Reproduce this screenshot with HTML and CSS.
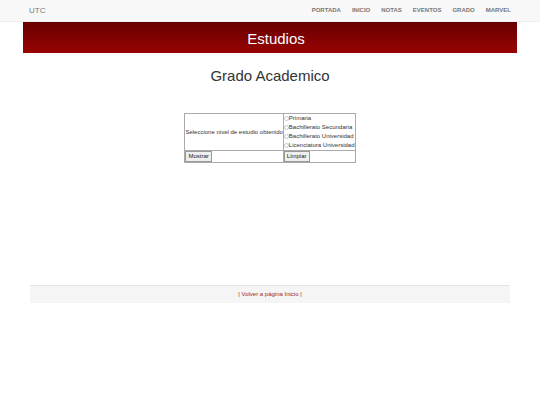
FILE: index.html
```html
<!DOCTYPE html>
<html lang="es">
<head>
<meta charset="utf-8">
<meta name="viewport" content="width=device-width, initial-scale=1">
<title>Estudios</title>
<link rel="stylesheet" href="styles.css">
</head>
<body>
<nav class="navbar">
  <a class="brand" href="#">UTC</a>
  <ul class="menu">
    <li><a href="#">PORTADA</a></li>
    <li><a href="#">INICIO</a></li>
    <li><a href="#">NOTAS</a></li>
    <li><a href="#">EVENTOS</a></li>
    <li><a href="#">GRADO</a></li>
    <li><a href="#">MARVEL</a></li>
  </ul>
</nav>
<header class="banner"><h1>Estudios</h1></header>
<main class="content">
  <h2>Grado Academico</h2>
  <form>
    <table class="studies">
      <tr>
        <td id="level-label">Seleccione nivel de estudio obtenido</td>
        <td>
          <div role="radiogroup" aria-labelledby="level-label">
            <label class="option"><input type="radio" name="level">Primaria</label>
            <label class="option"><input type="radio" name="level">Bachillerato Secundaria</label>
            <label class="option"><input type="radio" name="level">Bachillerato Universidad</label>
            <label class="option"><input type="radio" name="level">Licenciatura Universidad</label>
          </div>
        </td>
      </tr>
      <tr>
        <td><button type="button">Mostrar</button></td>
        <td><button type="reset">Limpiar</button></td>
      </tr>
    </table>
  </form>
</main>
<footer class="footer"><a href="#">| Volver a página Inicio |</a></footer>
</body>
</html>
```
FILE: styles.css
```css
* {
  box-sizing: border-box;
}

body {
  margin: 0;
  background: #fff;
  color: #333;
  font: 6px/9px "Liberation Sans", Arial, sans-serif;
}

a {
  text-decoration: none;
}

.navbar {
  display: flex;
  align-items: center;
  justify-content: space-between;
  height: 22px;
  padding: 0 29px;
  background: #f8f8f8;
  border-bottom: 1px solid #eee;
}

.brand {
  color: #777;
  font-size: 8px;
}

.menu {
  display: flex;
  gap: 11px;
  margin: 0;
  padding: 0;
  list-style: none;
}

.menu a {
  color: #777;
  font-weight: bold;
}

h1,
h2 {
  margin: 0;
  font-size: 15px;
  line-height: 17px;
  font-weight: normal;
  text-align: center;
}

.banner {
  margin: 0 23px;
  padding: 8px 0 6px 12px;
  background: linear-gradient(#670000, #990303);
  color: #fff;
}

.content {
  min-height: 232px;
  padding: 14px 30px 0;
}

.studies {
  margin: 29px auto 0;
  border-collapse: collapse;
}

.studies td {
  padding: 0;
  border: 1px solid #aaa;
}

.option {
  display: flex;
  align-items: center;
  white-space: nowrap;
}

.option input {
  appearance: none;
  width: 5px;
  height: 5px;
  margin: 0;
  border: 1px solid #ccc;
  border-radius: 50%;
  background: #fff;
}

.option input:checked {
  background: #333;
}

button {
  display: block;
  padding: 0 2px;
  border: 1px solid #999;
  background: #efefef;
  color: #222;
  font: inherit;
}

.footer {
  margin: 0 30px;
  padding: 4px 0;
  border-top: 1px solid #e7e7e7;
  background: #f5f5f5;
  text-align: center;
}

.footer a {
  color: #a71919;
}
```
